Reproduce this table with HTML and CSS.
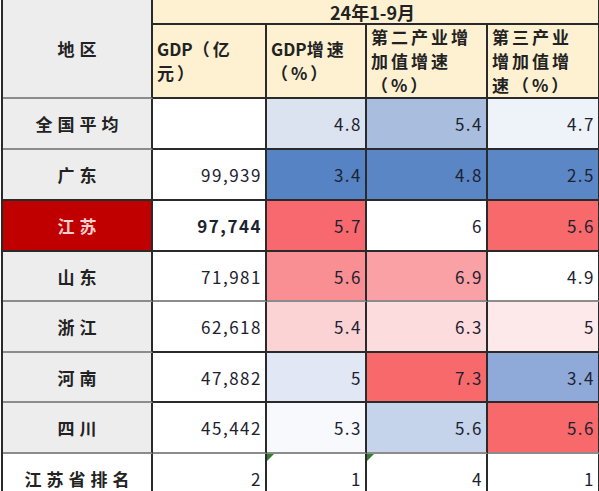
FILE: index.html
```html
<!DOCTYPE html>
<html lang="zh-CN">
<head>
  <meta charset="UTF-8" />
  <title>24年1-9月 GDP</title>
  <link rel="stylesheet" href="styles.css">
</head>
<body>
  <table class="gdp-table">
    <colgroup>
      <col class="c-region">
      <col class="c-gdp">
      <col class="c-rate">
      <col class="c-second">
      <col class="c-third">
    </colgroup>
    <thead>
      <tr class="head-top">
        <th rowspan="2" class="region head-region">地区</th>
        <th colspan="4" class="period">24年1-9月</th>
      </tr>
      <tr class="head-sub">
        <th class="sub"><span class="lat">GDP</span>（亿<br>元）</th>
        <th class="sub"><span class="lat">GDP</span>增速<br>（%）</th>
        <th class="sub">第二产业增<br>加值增速<br>（%）</th>
        <th class="sub">第三产业<br>增加值增<br>速（%）</th>
      </tr>
    </thead>
    <tbody>
      <tr class="r51">
        <td class="region">全国平均</td>
        <td class="num"></td>
        <td class="num" style="background:#dbe3f1">4.8</td>
        <td class="num" style="background:#a9bedf">5.4</td>
        <td class="num" style="background:#eef2f9">4.7</td>
      </tr>
      <tr class="r51 dark-line">
        <td class="region">广东</td>
        <td class="num">99,939</td>
        <td class="num" style="background:#5683c3">3.4</td>
        <td class="num" style="background:#5a86c5">4.8</td>
        <td class="num" style="background:#5b87c6">2.5</td>
      </tr>
      <tr class="r51 dark-line highlight">
        <td class="region">江苏</td>
        <td class="num strong">97,744</td>
        <td class="num" style="background:#f8696f">5.7</td>
        <td class="num">6</td>
        <td class="num" style="background:#f8696b">5.6</td>
      </tr>
      <tr class="r50 soft-line">
        <td class="region">山东</td>
        <td class="num">71,981</td>
        <td class="num" style="background:#f98f93">5.6</td>
        <td class="num" style="background:#f9a1a4">6.9</td>
        <td class="num">4.9</td>
      </tr>
      <tr class="r51">
        <td class="region">浙江</td>
        <td class="num">62,618</td>
        <td class="num" style="background:#fbd3d5">5.4</td>
        <td class="num" style="background:#fcdcdd">6.3</td>
        <td class="num" style="background:#fde9ea">5</td>
      </tr>
      <tr class="r50">
        <td class="region">河南</td>
        <td class="num">47,882</td>
        <td class="num" style="background:#e1e7f4">5</td>
        <td class="num" style="background:#f8696b">7.3</td>
        <td class="num" style="background:#8faad9">3.4</td>
      </tr>
      <tr class="r51 soft-line">
        <td class="region">四川</td>
        <td class="num">45,442</td>
        <td class="num" style="background:#f8f9fc">5.3</td>
        <td class="num" style="background:#c5d4ea">5.6</td>
        <td class="num" style="background:#f8696b">5.6</td>
      </tr>
      <tr class="r51 rank">
        <td class="region">江苏省排名</td>
        <td class="num">2</td>
        <td class="num flag">1</td>
        <td class="num flag">4</td>
        <td class="num">1</td>
      </tr>
    </tbody>
  </table>
</body>
</html>
```

FILE: styles.css
```css
* { box-sizing: border-box; }
html, body {
  margin: 0;
  padding: 0;
  background: #ffffff;
}
body {
  width: 599px;
  height: 491px;
  overflow: hidden;
  font-family: "Noto Sans CJK SC", "Noto Sans", sans-serif;
  color: #222222;
}

.gdp-table {
  table-layout: fixed;
  border-collapse: separate;
  border-spacing: 0;
  width: 599px;
  margin-left: 1px;
  border-left: 2px solid #2a2a2a;
}
.c-region { width: 150px; }
.c-gdp { width: 114px; }
.c-rate { width: 100px; }
.c-second { width: 121px; }
.c-third { width: 112px; }

.gdp-table th,
.gdp-table td {
  padding: 0 4px;
  border-right: 2px solid #2a2a2a;
  border-bottom: 2px solid #2a2a2a;
  background: #ffffff;
  overflow: hidden;
  white-space: nowrap;
}

/* header */
.head-top th { height: 25px; }
.head-sub th { height: 74px; }
.gdp-table .period {
  background: #fdf1d2;
  font-size: 18px;
  font-weight: bold;
  text-align: center;
  line-height: 20px;
  padding-right: 10px;
}
.gdp-table .sub {
  background: #fdf1d2;
  font-size: 17px;
  font-weight: bold;
  text-align: left;
  line-height: 24px;
  letter-spacing: 3px;
  vertical-align: middle;
}
.sub .lat { letter-spacing: 0; }
.gdp-table .head-region {
  background: #ededed;
  border-bottom-color: #8c8c8c;
}

/* region column */
.gdp-table .region {
  background: #ededed;
  text-align: center;
  font-size: 17px;
  font-weight: bold;
  letter-spacing: 5px;
  padding-left: 9px;
  border-bottom-color: #8c8c8c;
}
.r51 td { height: 51px; }
.r50 td { height: 50px; }
.dark-line .region { border-bottom-color: #2a2a2a; }
.highlight .region {
  background: #c00000;
  color: #f7cfcf;
}
.soft-line td { border-bottom-color: #8c8c8c; }

/* numbers */
.gdp-table .num {
  text-align: right;
  font-size: 17px;
  letter-spacing: 1.5px;
  padding-right: 3px;
  color: #1d2230;
}
.gdp-table .strong { font-weight: bold; }

.gdp-table .rank .region { background: #ffffff; }
.rank .flag { position: relative; }
.rank .flag::before {
  content: "";
  position: absolute;
  left: 0;
  top: 0;
  border-top: 7px solid #2e7d32;
  border-right: 7px solid transparent;
}
```
